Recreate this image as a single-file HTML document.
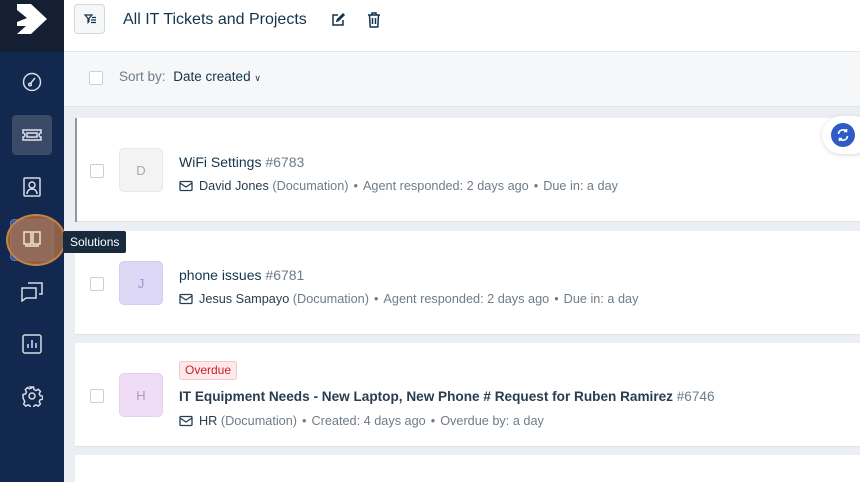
<!DOCTYPE html>
<html><head><style>
*{margin:0;padding:0;box-sizing:border-box}
html,body{width:860px;height:482px;overflow:hidden}
body{font-family:"Liberation Sans",sans-serif;background:#ebeef2;position:relative;color:#12344d}
.sb{position:absolute;left:0;top:0;width:64px;height:482px;background:#12284f}
.logo{position:absolute;left:0;top:0;width:64px;height:52px;background:#141f33}
.ic{position:absolute;left:12px;width:40px;height:40px;border-radius:4px;display:flex;align-items:center;justify-content:center}
.hdr{position:absolute;left:64px;top:0;right:0;height:52px;background:#fff;border-bottom:1px solid #e3e7eb}
.sort{position:absolute;left:64px;top:52px;right:0;height:55px;background:#f5f7f9;border-bottom:1px solid #dfe3e8}
.cb{position:absolute;width:14px;height:14px;border:1px solid #c9d0d8;border-radius:2px;background:#fff}
.card{position:absolute;left:75px;right:0;background:#fff;border-bottom:1px solid #dde2e7}
.av{position:absolute;left:44px;width:44px;height:44px;border-radius:5px;display:flex;align-items:center;justify-content:center;font-size:13px}
.t{position:absolute;left:104px;font-size:14px;color:#12344d;white-space:nowrap}
.m{position:absolute;left:104px;font-size:12.7px;color:#6f7c87;white-space:nowrap;display:flex;align-items:center}
.m b{font-weight:normal;color:#283d4f}
.dot{margin:0 5px}
.top{z-index:10}
</style></head><body>
<div class="sb"></div>
<div class="logo"><svg width="64" height="52"><path d="M17 4 L31 4 L47 19 L31 34 L17 34 L26 26 L17 26 Z" fill="#fff"/><path d="M17 10 L27 18 L17 22Z" fill="#141f33"/></svg></div>
<div class="ic" style="top:62px"><svg width="22" height="22" fill="none" stroke="#d5dce6" stroke-width="1.5"><circle cx="11" cy="11" r="8.5"/><path d="M9 13 L14 7"/><circle cx="9" cy="13.5" r="1.3"/></svg></div>
<div class="ic" style="top:115px;background:#3a4a67"><svg width="22" height="16" fill="none" stroke="#dce3ec" stroke-width="1.5"><path d="M2 3h18v3a2 2 0 0 0 0 4v3H2v-3a2 2 0 0 0 0-4z"/><rect x="6" y="6" width="10" height="4"/></svg></div>
<div class="ic" style="top:167px"><svg width="20" height="22" fill="none" stroke="#d5dce6" stroke-width="1.5"><rect x="2" y="2" width="16" height="18" rx="1"/><circle cx="10" cy="9" r="3"/><path d="M5 18c0-3 2-5 5-5s5 2 5 5"/></svg></div>
<div class="ic" style="top:271px"><svg width="24" height="22" fill="none" stroke="#d5dce6" stroke-width="1.5"><path d="M8 3h14v11h-3M2 8h14v10H6l-4 3z"/></svg></div>
<div class="ic" style="top:324px"><svg width="22" height="22" fill="none" stroke="#d5dce6" stroke-width="1.5"><rect x="2" y="2" width="18" height="18" rx="2"/><path d="M7 15v-4M11 15V7M15 15v-5"/></svg></div>
<div class="ic" style="top:376px"><svg width="22" height="22" fill="none" stroke="#d5dce6" stroke-width="1.5"><circle cx="11" cy="11" r="3"/><path d="M9.5 2h3l.5 2.5 2 1 2.3-1.2 2.1 2.1-1.2 2.3 1 2 2.5.5v3l-2.5.5-1 2 1.2 2.3-2.1 2.1-2.3-1.2-2 1-.5 2.5h-3l-.5-2.5-2-1-2.3 1.2-2.1-2.1 1.2-2.3-1-2L2 12.5v-3l2.5-.5 1-2-1.2-2.3 2.1-2.1 2.3 1.2 2-1z"/></svg></div>

<div class="hdr">
<div style="position:absolute;left:10px;top:4px;width:31px;height:30px;border:1px solid #cfd7df;border-radius:4px;background:#f5f7f9"><svg width="31" height="30" fill="none" stroke="#12344d" stroke-width="1.2"><path d="M10 10h7l-3 3.5v3l-1 1v-4zM16 15h5M16 17.5h5M17 12.5h4"/></svg></div>
<div style="position:absolute;left:59px;top:11px;font-size:16px;color:#12344d">All IT Tickets and Projects</div>
<svg style="position:absolute;left:266px;top:12px" width="16" height="16" fill="none" stroke="#12344d" stroke-width="1.5"><path d="M8 3H3v10h10V8M7 9l1.5-.5L14 3l-1-1-5.5 5.5z"/></svg>
<svg style="position:absolute;left:302px;top:11px" width="16" height="18" fill="none" stroke="#12344d" stroke-width="1.5"><path d="M2 4h12M6 4V2h4v2M3.5 4l.7 12h7.6l.7-12M6.5 7v6M9.5 7v6"/></svg>
</div>
<div class="sort">
<div class="cb" style="left:25px;top:19px"></div>
<div style="position:absolute;left:55px;top:17px;font-size:13.5px;color:#6f7c87">Sort by: <span style="color:#12344d;margin-left:4px">Date created <span style="font-size:9px">&#8744;</span></span></div>
</div>

<div class="card" style="top:118px;height:104px;left:75px">
<div style="position:absolute;left:0;top:0;width:2px;height:104px;background:#8d99a6"></div>
<div class="cb" style="left:15px;top:46px"></div>
<div class="av" style="top:30px;background:#f3f3f3;border:1px solid #e8e8e8;color:#a9a9a9">D</div>
<div class="t" style="top:36px">WiFi Settings <span style="color:#6f7c87">#6783</span></div>
<div class="m" style="top:61px"><svg width="14" height="12" fill="none" stroke="#283d4f" stroke-width="1.3" style="margin-right:6px"><rect x="1" y="1.5" width="12" height="9" rx="1"/><path d="M1 3l6 4 6-4"/></svg><b>David Jones</b>&nbsp;(Documation)<span class="dot">•</span>Agent responded: 2 days ago<span class="dot">•</span>Due in: a day</div>
</div>
<div style="position:absolute;left:822px;top:116px;width:50px;height:38px;border-radius:19px;background:#fff;box-shadow:0 1px 4px rgba(0,0,0,.15)"><div style="position:absolute;left:9px;top:7px;width:24px;height:24px;border-radius:50%;background:#2e5bc8"><svg width="24" height="24" fill="none" stroke="#fff" stroke-width="1.6"><path d="M7.5 11a4.5 4.5 0 0 1 8-2.5M16.5 13a4.5 4.5 0 0 1-8 2.5M15.5 6v2.5H13M8.5 18v-2.5H11"/></svg></div></div>

<div class="card" style="top:231px;height:104px">
<div class="cb" style="left:15px;top:46px"></div>
<div class="av" style="top:30px;background:#ddd8f6;border:1px solid #d2ccf0;color:#9c92cf">J</div>
<div class="t" style="top:36px">phone issues <span style="color:#6f7c87">#6781</span></div>
<div class="m" style="top:61px"><svg width="14" height="12" fill="none" stroke="#283d4f" stroke-width="1.3" style="margin-right:6px"><rect x="1" y="1.5" width="12" height="9" rx="1"/><path d="M1 3l6 4 6-4"/></svg><b>Jesus Sampayo</b>&nbsp;(Documation)<span class="dot">•</span>Agent responded: 2 days ago<span class="dot">•</span>Due in: a day</div>
</div>

<div class="card" style="top:343px;height:104px">
<div class="cb" style="left:15px;top:46px"></div>
<div class="av" style="top:30px;background:#efdcf5;border:1px solid #e6cff0;color:#b597c7">H</div>
<div style="position:absolute;left:104px;top:18px;height:19px;padding:0 5px;border:1px solid #f4c6cb;background:#fde9eb;color:#c82124;font-size:12px;line-height:17px;border-radius:3px">Overdue</div>
<div class="t" style="top:46px;font-weight:bold;color:#283d4f;font-size:13.6px">IT Equipment Needs - New Laptop, New Phone # Request for Ruben Ramirez <span style="font-weight:normal;color:#6f7c87">#6746</span></div>
<div class="m" style="top:71px"><svg width="14" height="12" fill="none" stroke="#283d4f" stroke-width="1.3" style="margin-right:6px"><rect x="1" y="1.5" width="12" height="9" rx="1"/><path d="M1 3l6 4 6-4"/></svg><b>HR</b>&nbsp;(Documation)<span class="dot">•</span>Created: 4 days ago<span class="dot">•</span>Overdue by: a day</div>
</div>

<div class="card" style="top:455px;height:40px;border:none"></div>

<div class="top" style="position:absolute;left:10px;top:219px;width:44px;height:42px;border-radius:4px;background:#2f5aa6;border:1px solid #4d7ad0"></div>
<div class="top" style="position:absolute;left:6px;top:214px;width:60px;height:52px;border-radius:50%;border:2px solid #c8813f;background:rgba(170,110,70,.8)"></div>
<svg class="top" style="position:absolute;left:22px;top:229px" width="20" height="20" fill="none" stroke="#f5e2cf" stroke-width="1.5"><path d="M2 3h7v12H2zM11 3h7v12h-7zM3 17h14"/></svg>
<div class="top" style="position:absolute;left:63px;top:231px;height:22px;padding:0 7px;background:#172a3e;color:#fff;font-size:12px;line-height:22px;border-radius:2px">Solutions</div>
</body></html>
